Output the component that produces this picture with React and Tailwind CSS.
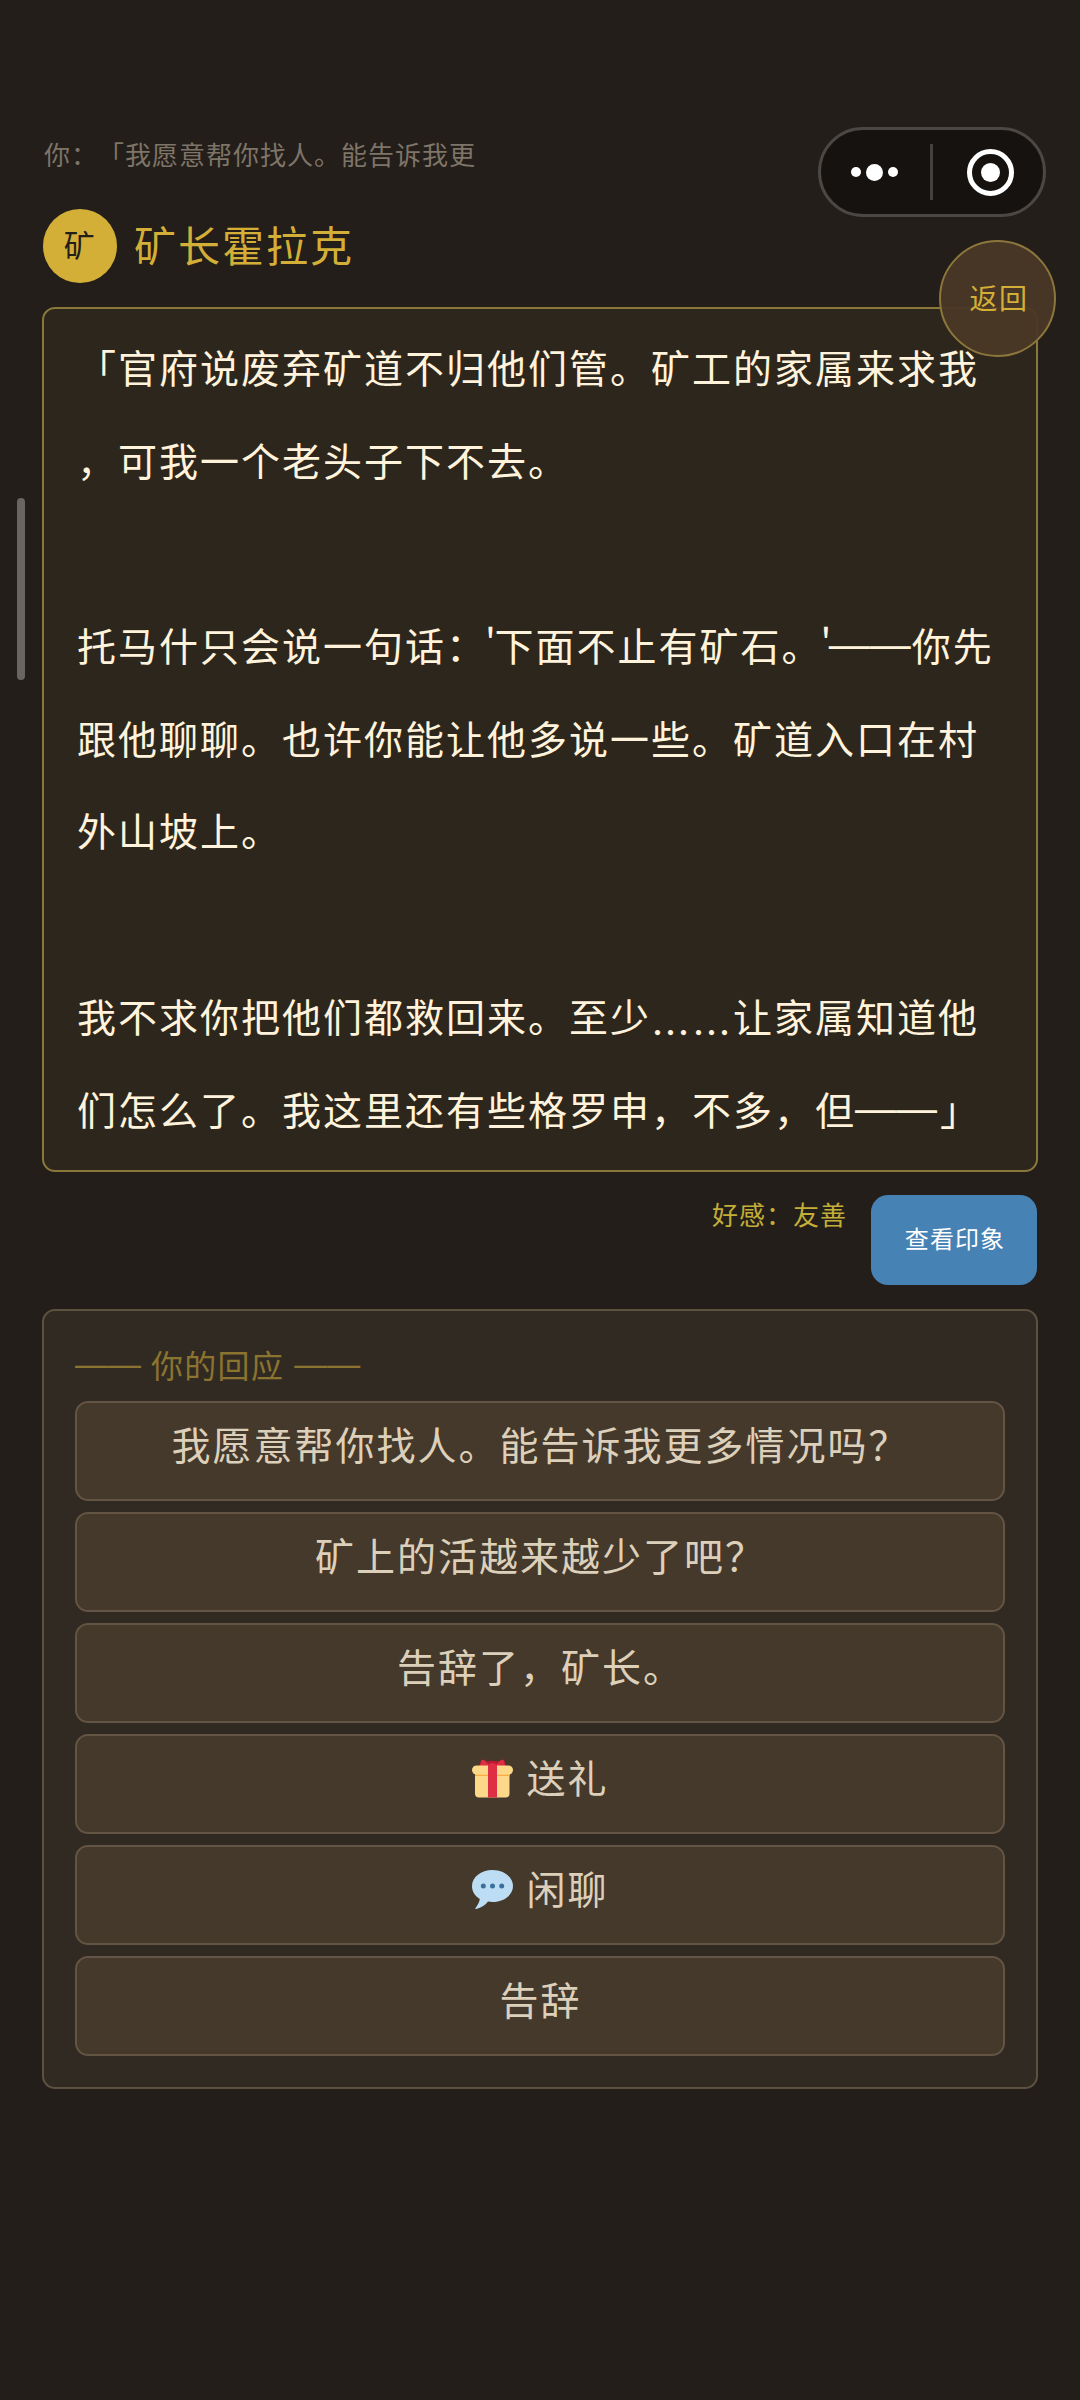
const Dash = () => (
  <span className="relative left-[-1px] top-[-3px] font-['Liberation_Sans',sans-serif] text-[41px] leading-none tracking-normal">——</span>
);
const Quote = () => <span className="relative left-[-2px] tracking-[-3.500px]">'</span>;
const Dots = () => <span className="relative top-[15px]">……</span>;

const DIALOGUE = [
  '「官府说废弃矿道不归他们管。矿工的家属来求我',
  '，可我一个老头子下不去。',
  '',
  <>托马什只会说一句话：<Quote />下面不止有矿石。<Quote /><Dash />你先</>,
  '跟他聊聊。也许你能让他多说一些。矿道入口在村',
  '外山坡上。',
  '',
  <>我不求你把他们都救回来。至少<Dots />让家属知道他</>,
  <>们怎么了。我这里还有些格罗申，不多，但<Dash /><span className="relative left-[2px]">」</span></>,
];

function GiftIcon() {
  return (
    <svg className="relative top-[2px] mr-[13px] h-[41px] w-[41px] shrink-0" viewBox="0 0 41 41">
      <path d="M7 9 L9 2.5 Q10 .8 12 2 L15 3.6 Q20.500 1.800 26 3.600 L29 2 Q31 .8 32.300 2.500 L34.500 9Z" fill="#be1931" />
      <path d="M8 8 L9.500 2.500 Q10.500 1 13 3 L18 8Z M33 8 L31.800 2.500 Q30.500 1 28 3 L23 8Z" fill="#dd2e44" />
      <path d="M3 15h34.500v20.500a4 4 0 0 1-4 4H7a4 4 0 0 1-4-4Z" fill="#fdd888" />
      <path d="M3 15h34.500v3H3Z" fill="#fcab40" />
      <rect x="0" y="7.500" width="41" height="9.200" rx="4.600" fill="#fdd888" />
      <path d="M16 7 Q20.500 3 25 7 V39.500 H16Z" fill="#dd2e44" />
    </svg>
  );
}

function BubbleIcon() {
  return (
    <svg className="relative top-[2px] mr-[13px] h-[41px] w-[41px] shrink-0" viewBox="0 0 41 41">
      <path d="M20.500 1C9 1 0 8 0 17c0 5.500 3 10 7.800 13C7.500 33 5.500 36.500 3.400 39.200c-.4.700 0 1 .8.800C9.500 38.800 13.500 36 16 32.600c1.500.3 3 .4 4.500.4C32 33 41 26 41 17S32 1 20.500 1Z" fill="#bdddf4" />
      <circle cx="11.300" cy="17" r="2.500" fill="#3b6f9b" />
      <circle cx="20.500" cy="17" r="2.500" fill="#3b6f9b" />
      <circle cx="29.700" cy="17" r="2.500" fill="#3b6f9b" />
    </svg>
  );
}

const OPTIONS = [
  { label: '我愿意帮你找人。能告诉我更多情况吗？' },
  { label: '矿上的活越来越少了吧？' },
  { label: '告辞了，矿长。' },
  { label: '送礼', icon: <GiftIcon /> },
  { label: '闲聊', icon: <BubbleIcon /> },
  { label: '告辞' },
];

function Capsule() {
  return (
    <div className="absolute left-[818px] top-[127px] flex h-[90px] w-[228px] items-center rounded-full border-[3px] border-[#4b4744] bg-[#151210]">
      <div className="flex w-[109px] items-center justify-center gap-[5px] pr-[3px]">
        <span className="size-[10px] rounded-full bg-white" />
        <span className="size-[17px] rounded-full bg-white" />
        <span className="size-[10px] rounded-full bg-white" />
      </div>
      <div className="h-14 w-[3px] bg-[#454140]" />
      <div className="flex flex-1 items-center justify-center pl-1">
        <div className="flex size-[47px] items-center justify-center rounded-full border-[5px] border-white">
          <span className="size-[19px] rounded-full bg-white" />
        </div>
      </div>
    </div>
  );
}

export default function App() {
  return (
    <div
      lang="zh-CN"
      className="relative flex h-[2400px] w-[1080px] flex-col overflow-hidden bg-[#231e1a] px-[42px] pt-[134px] font-['Noto_Sans_CJK_SC',sans-serif] whitespace-nowrap [text-spacing-trim:space-all]"
    >
      <div className="h-10 pl-[2px] text-[26px] leading-10 tracking-[1px] text-[#7e7468]">你：「我愿意帮你找人。能告诉我更</div>

      <header className="mt-[35px] flex h-[74px] items-center pl-px">
        <div className="flex size-[74px] items-center justify-center rounded-full bg-[#d4af37] pb-[3px] text-[31px] tracking-[1.500px] text-[#231e1a]">矿</div>
        <h1 className="ml-[17px] h-[74px] text-[42px] leading-[69px] tracking-[2px] text-[#d4af37]">矿长霍拉克</h1>
      </header>

      <section className="mt-6 h-[865px] rounded-[13px] border-2 border-[#8a783b] bg-[#2d261d] px-[33px] pt-[11px] text-[39px] tracking-[2px] text-[#fff3dc]">
        {DIALOGUE.map((line, i) => (
          <p key={i} className="h-[92.700px] leading-[92.700px]">{line}</p>
        ))}
      </section>

      <div className="mt-[23px] flex h-[90px] items-start justify-end">
        <span className="mr-[24px] h-10 text-[26px] leading-[37px] tracking-[1px] text-[#c3ae38]">好感：友善</span>
        <button className="h-[90px] w-[166px] rounded-[17px] bg-[#4682b4] pb-[4px] pl-[2px] text-[24px] tracking-[1.100px] text-white">查看印象</button>
        <span className="w-px" />
      </div>

      <section className="mt-6 h-[780px] rounded-[13px] border-2 border-[#5d5140] bg-[#312a23] px-[31px] pt-[28px]">
        <div className="flex h-[50px] items-center text-[32px] tracking-[1.300px] text-[#8a7430]">
          <span className="font-['Liberation_Sans',sans-serif] text-[33px] tracking-normal">——</span>
          <span className="mx-[10px]">你的回应</span>
          <span className="font-['Liberation_Sans',sans-serif] text-[33px] tracking-normal">——</span>
        </div>
        <div className="mt-[12px] flex flex-col gap-[10.600px]">
          {OPTIONS.map(({ label, icon }) => (
            <button
              key={label}
              className="flex h-[100.400px] items-center justify-center rounded-[13px] border-2 border-[#635443] bg-[#45392b] pb-[16px] pl-px text-[39px] leading-none tracking-[2px] text-[#ddd0bb]"
            >
              {icon}
              {label}
            </button>
          ))}
        </div>
      </section>

      <div className="absolute left-[17px] top-[498px] h-[182px] w-2 rounded-full bg-[#6a6561]" />
      <Capsule />
      <button className="absolute left-[939px] top-[240px] flex size-[117px] items-center justify-center rounded-full border-2 border-[#8c763c] bg-[#4a3826]/95 pb-1 pl-[3px] text-[28px] tracking-[1.500px] text-[#d4af37]">返回</button>
    </div>
  );
}
